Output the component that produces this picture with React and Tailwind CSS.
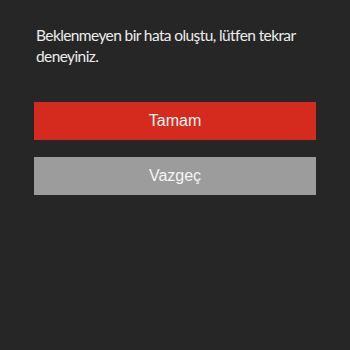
export default function App() {
  return (
    <div className="w-[350px] h-[350px] bg-[#262626] px-[34px] pt-[25px]">
      <p className="pl-[2px] text-[15.5px] leading-[21px] tracking-[-0.6px] text-[#ececec] font-['Lato',sans-serif]">
        Beklenmeyen bir hata oluştu, lütfen tekrar deneyiniz.
      </p>
      <div className="mt-[35px] flex flex-col gap-[17px]">
        <button className="h-[38px] w-full bg-[#d52b1f] text-[16px] text-[#f5f5f5] font-['Liberation_Sans',sans-serif]">
          Tamam
        </button>
        <button className="h-[38px] w-full bg-[#9c9c9c] text-[16px] text-[#f5f5f5] font-['Liberation_Sans',sans-serif]">
          Vazgeç
        </button>
      </div>
    </div>
  );
}
